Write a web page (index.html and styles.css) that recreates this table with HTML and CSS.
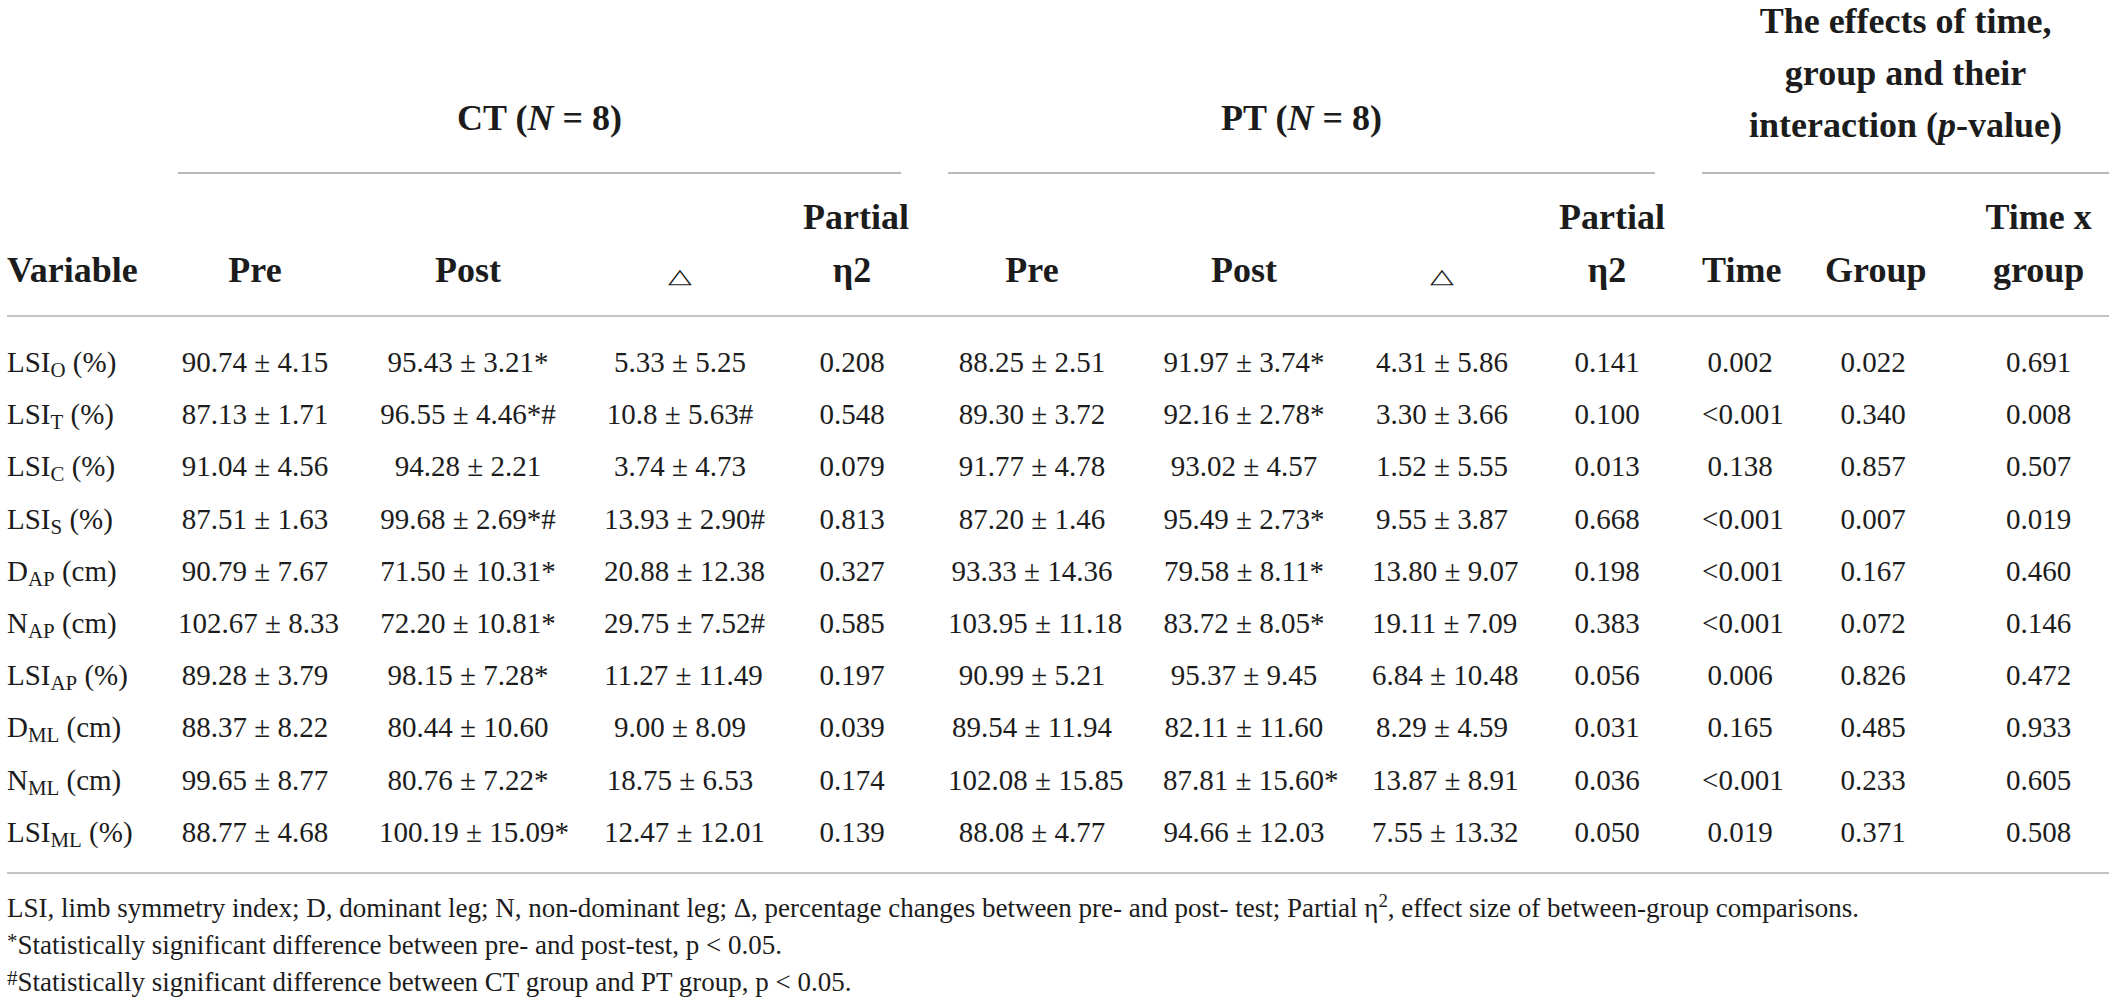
FILE: index.html
```html
<!DOCTYPE html>
<html lang="en">
<head>
<meta charset="utf-8">
<title>Table</title>
<link rel="stylesheet" href="styles.css">
</head>
<body>
<table class="stats">
  <colgroup>
    <col class="w-var">
    <col class="w-ct-pre"><col class="w-ct-post"><col class="w-ct-delta"><col class="w-ct-eta">
    <col class="w-pt-pre"><col class="w-pt-post"><col class="w-pt-delta"><col class="w-pt-eta">
    <col class="w-time"><col class="w-group"><col class="w-txg">
  </colgroup>
  <thead>
    <tr class="grp-row">
      <th class="blank"></th>
      <th colspan="4" class="grp"><div class="grp-title single">CT (<i>N</i> = 8)</div></th>
      <th colspan="4" class="grp"><div class="grp-title single">PT (<i>N</i> = 8)</div></th>
      <th colspan="3" class="grp"><div class="grp-title multi">The effects of time,<br>group and their<br>interaction (<i>p</i>-value)</div></th>
    </tr>
    <tr class="col-row">
      <th class="var">Variable</th>
      <th>Pre</th>
      <th>Post</th>
      <th><span class="delta">△</span></th>
      <th>Partial<br>η2</th>
      <th>Pre</th>
      <th>Post</th>
      <th><span class="delta">△</span></th>
      <th>Partial<br>η2</th>
      <th>Time</th>
      <th>Group</th>
      <th>Time x<br>group</th>
    </tr>
  </thead>
  <tbody>
    <tr class="first">
      <td class="var">LSI<sub>O</sub> (%)</td>
      <td>90.74 ± 4.15</td><td>95.43 ± 3.21*</td><td>5.33 ± 5.25</td><td>0.208</td>
      <td>88.25 ± 2.51</td><td>91.97 ± 3.74*</td><td>4.31 ± 5.86</td><td>0.141</td>
      <td>0.002</td><td>0.022</td><td>0.691</td>
    </tr>
    <tr>
      <td class="var">LSI<sub>T</sub> (%)</td>
      <td>87.13 ± 1.71</td><td>96.55 ± 4.46*#</td><td>10.8 ± 5.63#</td><td>0.548</td>
      <td>89.30 ± 3.72</td><td>92.16 ± 2.78*</td><td>3.30 ± 3.66</td><td>0.100</td>
      <td>&lt;0.001</td><td>0.340</td><td>0.008</td>
    </tr>
    <tr>
      <td class="var">LSI<sub>C</sub> (%)</td>
      <td>91.04 ± 4.56</td><td>94.28 ± 2.21</td><td>3.74 ± 4.73</td><td>0.079</td>
      <td>91.77 ± 4.78</td><td>93.02 ± 4.57</td><td>1.52 ± 5.55</td><td>0.013</td>
      <td>0.138</td><td>0.857</td><td>0.507</td>
    </tr>
    <tr>
      <td class="var">LSI<sub>S</sub> (%)</td>
      <td>87.51 ± 1.63</td><td>99.68 ± 2.69*#</td><td>13.93 ± 2.90#</td><td>0.813</td>
      <td>87.20 ± 1.46</td><td>95.49 ± 2.73*</td><td>9.55 ± 3.87</td><td>0.668</td>
      <td>&lt;0.001</td><td>0.007</td><td>0.019</td>
    </tr>
    <tr>
      <td class="var">D<sub>AP</sub> (cm)</td>
      <td>90.79 ± 7.67</td><td>71.50 ± 10.31*</td><td>20.88 ± 12.38</td><td>0.327</td>
      <td>93.33 ± 14.36</td><td>79.58 ± 8.11*</td><td>13.80 ± 9.07</td><td>0.198</td>
      <td>&lt;0.001</td><td>0.167</td><td>0.460</td>
    </tr>
    <tr>
      <td class="var">N<sub>AP</sub> (cm)</td>
      <td>102.67 ± 8.33</td><td>72.20 ± 10.81*</td><td>29.75 ± 7.52#</td><td>0.585</td>
      <td>103.95 ± 11.18</td><td>83.72 ± 8.05*</td><td>19.11 ± 7.09</td><td>0.383</td>
      <td>&lt;0.001</td><td>0.072</td><td>0.146</td>
    </tr>
    <tr>
      <td class="var">LSI<sub>AP</sub> (%)</td>
      <td>89.28 ± 3.79</td><td>98.15 ± 7.28*</td><td>11.27 ± 11.49</td><td>0.197</td>
      <td>90.99 ± 5.21</td><td>95.37 ± 9.45</td><td>6.84 ± 10.48</td><td>0.056</td>
      <td>0.006</td><td>0.826</td><td>0.472</td>
    </tr>
    <tr>
      <td class="var">D<sub>ML</sub> (cm)</td>
      <td>88.37 ± 8.22</td><td>80.44 ± 10.60</td><td>9.00 ± 8.09</td><td>0.039</td>
      <td>89.54 ± 11.94</td><td>82.11 ± 11.60</td><td>8.29 ± 4.59</td><td>0.031</td>
      <td>0.165</td><td>0.485</td><td>0.933</td>
    </tr>
    <tr>
      <td class="var">N<sub>ML</sub> (cm)</td>
      <td>99.65 ± 8.77</td><td>80.76 ± 7.22*</td><td>18.75 ± 6.53</td><td>0.174</td>
      <td>102.08 ± 15.85</td><td>87.81 ± 15.60*</td><td>13.87 ± 8.91</td><td>0.036</td>
      <td>&lt;0.001</td><td>0.233</td><td>0.605</td>
    </tr>
    <tr class="last">
      <td class="var">LSI<sub>ML</sub> (%)</td>
      <td>88.77 ± 4.68</td><td>100.19 ± 15.09*</td><td>12.47 ± 12.01</td><td>0.139</td>
      <td>88.08 ± 4.77</td><td>94.66 ± 12.03</td><td>7.55 ± 13.32</td><td>0.050</td>
      <td>0.019</td><td>0.371</td><td>0.508</td>
    </tr>
  </tbody>
</table>
<div class="notes">
  <p>LSI, limb symmetry index; D, dominant leg; N, non-dominant leg; Δ, percentage changes between pre- and post- test; Partial η<sup class="sup2">2</sup>, effect size of between-group comparisons.</p>
  <p><sup class="mark">*</sup>Statistically significant difference between pre- and post-test, p &lt; 0.05.</p>
  <p><sup class="mark">#</sup>Statistically significant difference between CT group and PT group, p &lt; 0.05.</p>
</div>
</body>
</html>
```

FILE: styles.css
```css
html, body {
  margin: 0;
  padding: 0;
  background: #ffffff;
}

body {
  padding: 0 7px;
  color: #1c1c1c;
  font-family: "Liberation Serif", "Times New Roman", serif;
}

.stats {
  border-collapse: separate;
  border-spacing: 0;
  table-layout: fixed;
  width: 2102px;
}

.w-var { width: 124px; }
.w-ct-pre { width: 201px; }
.w-ct-post { width: 225px; }
.w-ct-delta { width: 199px; }
.w-ct-eta { width: 145px; }
.w-pt-pre { width: 215px; }
.w-pt-post { width: 209px; }
.w-pt-delta { width: 187px; }
.w-pt-eta { width: 143px; }
.w-time { width: 123px; }
.w-group { width: 143px; }
.w-txg { width: 188px; }

.stats th {
  font-weight: 700;
  font-size: 36px;
  text-align: center;
  vertical-align: bottom;
  padding: 0 0 0 47px;
  white-space: nowrap;
}

.stats th.blank {
  padding: 0;
}

.grp-title {
  line-height: 52px;
  border-bottom: 2px solid #b9b9b9;
}

.grp-title.single {
  padding-bottom: 28px;
}

.grp-title.multi {
  margin-top: -5px;
  padding-bottom: 21px;
}

.col-row th {
  line-height: 53px;
  padding-top: 17px;
  padding-bottom: 18px;
  border-bottom: 2px solid #c4c4c4;
}

.stats th.var,
.stats td.var {
  text-align: left;
  padding-left: 0;
}

.delta {
  display: inline-block;
  font-family: "DejaVu Sans", sans-serif;
  font-weight: 400;
  font-size: 31px;
  transform: scaleY(0.66);
  transform-origin: 50% 80%;
}

.stats td {
  font-size: 29px;
  line-height: 52.2px;
  text-align: center;
  vertical-align: top;
  padding: 0 0 0 47px;
  white-space: nowrap;
}

.stats tr.first td {
  padding-top: 19px;
}

.stats tr.last td {
  padding-bottom: 14px;
  border-bottom: 2px solid #c4c4c4;
}

.stats sub {
  font-size: 0.72em;
  line-height: 0;
  vertical-align: -0.22em;
}

.notes {
  margin-top: 16px;
  font-size: 27px;
  line-height: 37px;
}

.notes p {
  margin: 0;
}

.notes sup {
  line-height: 0;
}

.sup2 {
  font-size: 0.7em;
  vertical-align: 0.55em;
}

.mark {
  font-size: 0.78em;
  vertical-align: 0.3em;
}
```
